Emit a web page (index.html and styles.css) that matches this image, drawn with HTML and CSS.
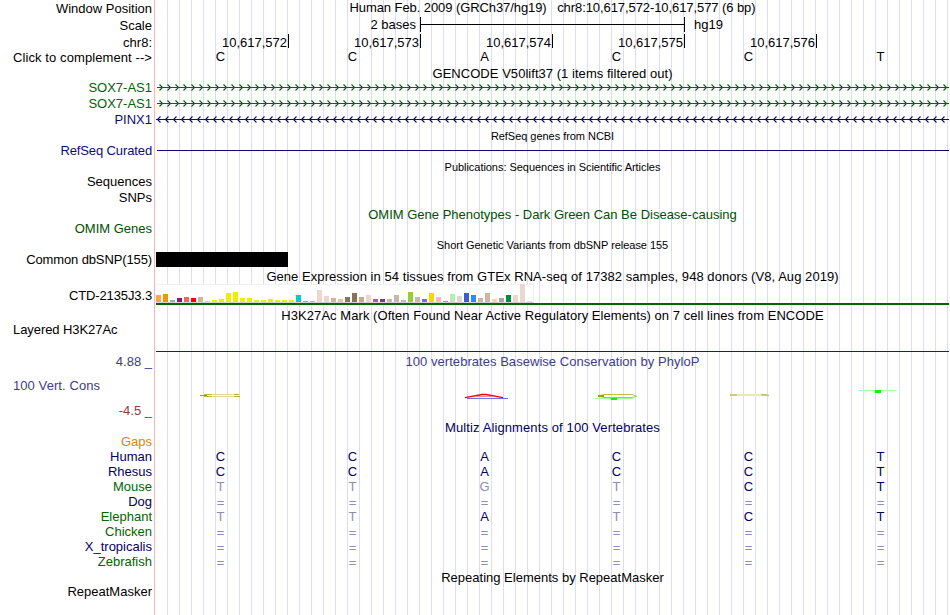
FILE: index.html
```
<!DOCTYPE html>
<html lang="en">
<head>
  <meta charset="UTF-8">
  <title>Human chr8:10,617,572-10,617,577 Genome Browser</title>
  <link rel="stylesheet" href="styles.css">
</head>
<body>

<div class="browser">
  <div class="row h17"><div class="label">Window Position</div><div class="track title t-position">Human Feb. 2009 (GRCh37/hg19) &nbsp; chr8:10,617,572-10,617,577 (6 bp)</div></div>
  <div class="row h17">
    <div class="label">Scale</div>
    <div class="track scale"><span class="scale-size">2 bases</span><span class="scale-bar"></span><span class="assembly">hg19</span></div>
  </div>
  <div class="row h16">
    <div class="label chrom">chr8:</div>
    <div class="track ruler"><span>10,617,572</span><span>10,617,573</span><span>10,617,574</span><span>10,617,575</span><span>10,617,576</span></div>
  </div>
  <div class="row h15"><div class="label wide">Click to complement --&gt;</div><div class="track bases top-bases" data-bases="CCACCT"></div></div>

  <div class="row h15"><div class="label"></div><div class="track title low t-gencode">GENCODE V50lift37 (1 items filtered out)</div></div>
  <div class="row h16 green"><div class="label">SOX7-AS1</div><div class="track strand" data-dir="right"></div></div>
  <div class="row h16 green"><div class="label">SOX7-AS1</div><div class="track strand" data-dir="right"></div></div>
  <div class="row h16 navy"><div class="label">PINX1</div><div class="track strand" data-dir="left"></div></div>

  <div class="row h15"><div class="label"></div><div class="track title low small">RefSeq genes from NCBI</div></div>
  <div class="row h16 navy"><div class="label tight">RefSeq Curated</div><div class="track refseq"><div class="line"></div></div></div>

  <div class="row h15"><div class="label"></div><div class="track title low small">Publications: Sequences in Scientific Articles</div></div>
  <div class="row h16"><div class="label">Sequences</div><div class="track"></div></div>
  <div class="row h16"><div class="label">SNPs</div><div class="track"></div></div>

  <div class="row h15 omim"><div class="label"></div><div class="track title low">OMIM Gene Phenotypes - Dark Green Can Be Disease-causing</div></div>
  <div class="row h16 omim"><div class="label">OMIM Genes</div><div class="track"></div></div>

  <div class="row h15"><div class="label"></div><div class="track title low small">Short Genetic Variants from dbSNP release 155</div></div>
  <div class="row h16"><div class="label tight">Common dbSNP(155)</div><div class="track"><div class="snp"></div></div></div>

  <div class="row h15"><div class="label"></div><div class="track title low t-gtex">Gene Expression in 54 tissues from GTEx RNA-seq of 17382 samples, 948 donors (V8, Aug 2019)</div></div>
  <div class="row gtex-row"><div class="label tight">CTD-2135J3.3</div><div class="track gtex"><div class="chart" id="gtexChart"></div></div></div>

  <div class="row h16"><div class="label"></div><div class="track title t-h3k">H3K27Ac Mark (Often Found Near Active Regulatory Elements) on 7 cell lines from ENCODE</div></div>
  <div class="row layered-row"><div class="label left">Layered H3K27Ac</div><div class="track"></div></div>

  <div class="row phylop-title phylop"><div class="label">4.88 _</div><div class="track title t-phylop">100 vertebrates Basewise Conservation by PhyloP</div></div>
  <div class="row cons-row phylop">
    <div class="label cons-label"><span class="cons-name">100 Vert. Cons</span><span class="cons-min">-4.5 _</span></div>
    <div class="track">
      <!-- squashed base logos: C, A, C/T, C, T -->
      <svg class="logo" width="793" height="51" viewBox="156 369 793 51" fill="none">
        <path d="M206 394.5H240M206 396.5H240" stroke="#dcdc8c"/>
        <path d="M200 395.5H207" stroke="#a0a000"/>
        <path d="M204 394.5H212M204 396.5H212M234 394.5H239M234 396.5H240" stroke="#b4b432"/>
        <path d="M465 397.7L482 394.5H486L503 397.7" stroke="#f00" stroke-width="1.3"/>
        <path d="M475 396.5H493" stroke="#ff8c8c"/>
        <path d="M467 398.5H508" stroke="#6e6eff"/>
        <path d="M595 398.5H633" stroke="#a0ffa0"/>
        <path d="M636 396L632 394.5H604L598 396L604 397.5H632L637 396.3" stroke="#c0c03c"/>
        <path d="M598 396H604" stroke="#a0a000" stroke-width="2"/>
        <path d="M611 399H617" stroke="#0f0" stroke-width="2"/>
        <path d="M730 395H767" stroke="#e6e6be" stroke-width="2"/>
        <path d="M730 395H737M761 394.5L769 395.5" stroke="#c3c35f" stroke-width="1.5"/>
        <path d="M859 390.5H897" stroke="#aaffaa"/>
        <path d="M875 391.5H881" stroke="#0f0" stroke-width="3"/>
      </svg>
    </div>
  </div>

  <div class="row h15 multiz"><div class="label"></div><div class="track title t-multiz">Multiz Alignments of 100 Vertebrates</div></div>
  <div class="row h14 gaps"><div class="label">Gaps</div><div class="track"></div></div>
  <div class="row h15 multiz"><div class="label">Human</div><div class="track bases" data-bases="CCACCT"></div></div>
  <div class="row h15 multiz"><div class="label">Rhesus</div><div class="track bases" data-bases="CCACCT"></div></div>
  <div class="row h15 multiz even"><div class="label">Mouse</div><div class="track bases" data-bases="ttgtCT"></div></div>
  <div class="row h15 multiz"><div class="label">Dog</div><div class="track bases" data-bases="======"></div></div>
  <div class="row h15 multiz even"><div class="label">Elephant</div><div class="track bases" data-bases="ttAtCT"></div></div>
  <div class="row h15 multiz even"><div class="label">Chicken</div><div class="track bases" data-bases="======"></div></div>
  <div class="row h15 multiz"><div class="label">X_tropicalis</div><div class="track bases" data-bases="======"></div></div>
  <div class="row h15 multiz even"><div class="label">Zebrafish</div><div class="track bases" data-bases="======"></div></div>

  <div class="row h15"><div class="label"></div><div class="track title low">Repeating Elements by RepeatMasker</div></div>
  <div class="row h15"><div class="label">RepeatMasker</div><div class="track"></div></div>
</div>

<script>
  // lower case = base differs from human, drawn faded
  document.querySelectorAll('.bases').forEach(track => {
    for (const base of track.dataset.bases) {
      const cell = document.createElement('span');
      cell.textContent = base.toUpperCase();
      if (base !== base.toUpperCase()) cell.classList.add('mismatch');
      if (base === '=') cell.classList.add('mismatch', 'gap');
      track.appendChild(cell);
    }
  });

  // intron line with direction arrows every 8px
  document.querySelectorAll('.strand').forEach(track => {
    const right = track.dataset.dir === 'right';
    let d = '';
    for (let x = 0; x < 793; x += 8) {
      d += right ? `M${x + 3.5} 4.5L${x + 6.5} 7.5L${x + 3.5} 10.5` : `M${x + 4.5} 4.5L${x + 1.5} 7.5L${x + 4.5} 10.5`;
    }
    track.innerHTML = `<svg width="793" height="16" fill="none" stroke="currentColor">
      <path d="M${right ? 1 : 0} 7.5H793"/><path d="${d}" stroke-width="1.1"/></svg>`;
  });

  const tissues = [
    [7, '#ffa54f'], [8, '#ee9a00'], [2, '#8fbc8f'], [4, '#8b1c62'], [5, '#ee6a50'], [4, '#ff0000'],
    [5, '#cdb79e'], [1, '#eeee00'], [2, '#eeee00'], [3, '#eeee00'], [9, '#eeee00'], [10, '#eeee00'],
    [4, '#eeee00'], [4, '#eeee00'], [2, '#eeee00'], [2, '#eeee00'], [3, '#eeee00'], [2, '#eeee00'],
    [2, '#eeee00'], [2, '#eeee00'], [7, '#00cdcd'], [1, '#ee82ee'], [1, '#9ac0cd'], [12, '#eed5d2'],
    [6, '#eed5d2'], [4, '#cdb79e'], [3, '#eec591'], [5, '#8b7355'], [9, '#8b7355'], [5, '#cdaa7d'],
    [7, '#eed5d2'], [3, '#b452cd'], [3, '#7a378b'], [3, '#cdb79e'], [7, '#cdb79e'], [2, '#cdb79e'],
    [10, '#9acd32'], [5, '#cdb79e'], [3, '#7a67ee'], [9, '#ffd700'], [5, '#ffb6c1'], [1, '#cd9b1d'],
    [8, '#b4eeb4'], [6, '#d9d9d9'], [9, '#3a5fcd'], [7, '#1e90ff'], [4, '#cdb79e'], [9, '#cdb79e'],
    [3, '#ffd39b'], [4, '#a6a6a6'], [7, '#008b45'], [7, '#eed5d2'], [18, '#eed5d2'], [1, '#eed5d2']
  ];
  const chart = document.getElementById('gtexChart');
  tissues.forEach(([height, color]) => {
    const bar = document.createElement('i');
    bar.style.height = height + 'px';
    bar.style.backgroundColor = color;
    chart.appendChild(bar);
  });
</script>

</body>
</html>
```
FILE: styles.css
```
* {
  box-sizing: border-box;
  margin: 0;
  padding: 0;
}

body {
  background: #fff;
  color: #000;
  font-family: "Liberation Sans", Arial, sans-serif;
  font-size: 13px;
  overflow: hidden;
}

.browser {
  width: 950px;
  height: 615px;
  background:
    linear-gradient(#ffb4b4, #ffb4b4) 154px 0 / 1px 100% no-repeat,
    repeating-linear-gradient(to right, #dcdcf5 0, #dcdcf5 1px, transparent 1px, transparent 12px) 167px 0 / 783px 100% no-repeat;
}

.row {
  display: flex;
  white-space: nowrap;
}

.h14 { height: 14px; line-height: 14px; }
.h15 { height: 15px; line-height: 15px; }
.h16 { height: 16px; line-height: 16px; }
.h17 { height: 17px; line-height: 17px; }

.label {
  width: 156px;
  padding-right: 4px;
  text-align: right;
  flex-shrink: 0;
}

.label.left {
  padding-left: 13px;
  text-align: left;
  letter-spacing: -0.07px;
}

.tight { letter-spacing: -0.12px; }
.wide { letter-spacing: 0.09px; }

.chrom {
  padding-top: 1px;
}

.track {
  width: 793px;
}

.track svg {
  display: block;
}

.title {
  text-align: center;
}

.low {
  padding-top: 1px;
}

.small {
  font-size: 11px;
  letter-spacing: -0.04px;
}

.t-position { letter-spacing: -0.08px; line-height: 15px; }
.t-gencode { letter-spacing: 0.04px; }
.t-gtex { letter-spacing: 0.055px; }
.t-h3k { letter-spacing: 0.055px; padding-top: 2px; }
.t-phylop { letter-spacing: 0.04px; }
.t-multiz { letter-spacing: 0.11px; }

.green { color: #006400; }
.navy { color: #0c0c78; }
.omim { color: #005000; }
.phylop { color: #3c3c8c; }
.multiz { color: #000064; }
.gaps { color: #e68200; }

.even .label {
  color: #006400;
}

/* scale + coordinates */
.scale {
  display: flex;
}

.scale-size {
  width: 264px;
  padding-right: 4px;
  text-align: right;
  line-height: 16px;
}

.scale-bar {
  width: 265px;
  height: 15px;
  margin-right: 9px;
  border: solid #000;
  border-width: 0 1px;
  background: linear-gradient(#000, #000) 0 7px / 100% 1px no-repeat;
}

.assembly {
  line-height: 16px;
}

.ruler {
  display: flex;
}

.ruler span {
  width: 132px;
  height: 14px;
  padding: 1px 1px 0 0;
  border-right: 1px solid #000;
  text-align: right;
}

.ruler span:first-child {
  width: 133px;
}

.bases {
  display: grid;
  grid-template-columns: repeat(6, 132px);
  text-align: center;
}

.bases span {
  padding-right: 3px;
}

.top-bases {
  line-height: 13px;
}

.mismatch {
  color: #8c8cb4;
}

.gap {
  padding-top: 1px;
}

.refseq {
  padding-left: 1px;
}

.line {
  height: 1px;
  margin-top: 7px;
  background: #0c0c78;
}

.snp {
  width: 132px;
  height: 15px;
  background: #000;
}

/* GTEx expression bars */
.gtex-row {
  height: 23px;
  line-height: 25px;
}

.gtex {
  height: 22px;
  padding-top: 1px;
  border-bottom: 2px solid #006400;
}

.chart {
  display: flex;
  align-items: flex-end;
  gap: 2px;
  width: 378px;
  height: 19px;
  border: 1px solid #f0f0f0;
  border-left: 0;
  border-bottom-color: #d2d2d2;
  background: #fff;
}

.chart i {
  width: 5px;
}

.layered-row {
  height: 30px;
  line-height: 15px;
}

.layered-row .track {
  border-bottom: 1px solid #14285a;
}

/* conservation */
.phylop-title {
  height: 17px;
  line-height: 19px;
}

.cons-row {
  height: 51px;
}

.cons-label {
  display: flex;
  flex-direction: column;
  padding-left: 13px;
}

.cons-name {
  margin-top: 9px;
  text-align: left;
  letter-spacing: 0.08px;
}

.cons-min {
  margin-top: 10px;
  color: #8c3c3c;
}
```
